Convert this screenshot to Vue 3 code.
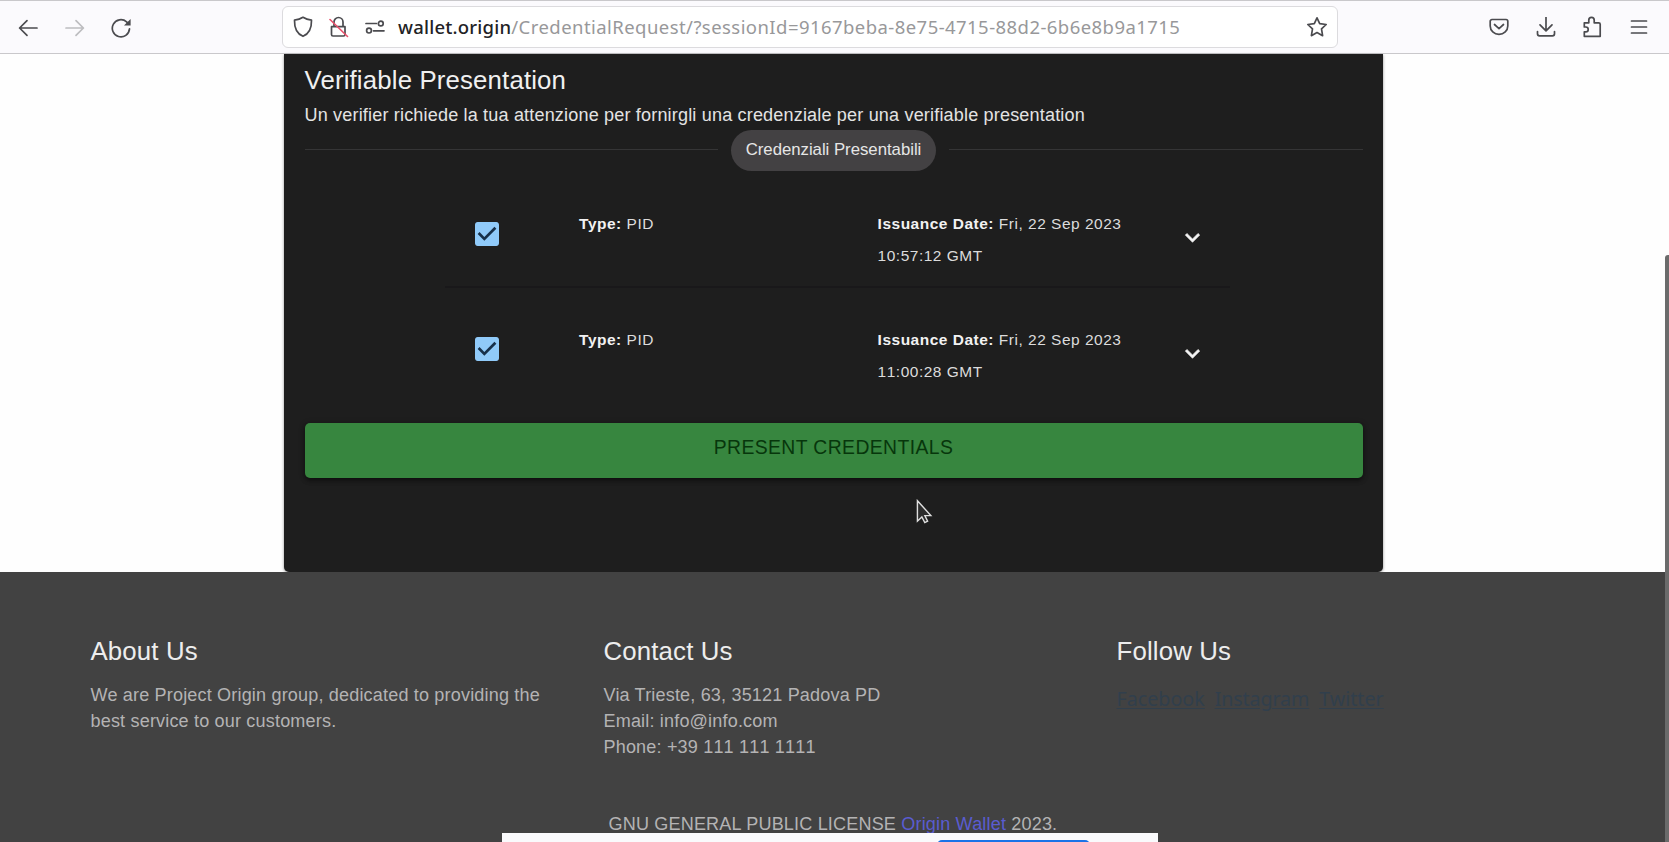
<script setup>
const host = 'wallet.origin'
const path = '/CredentialRequest/?sessionId=9167beba-8e75-4715-88d2-6b6e8b9a1715'
const credentials = [
  { type: 'PID', day: 'Fri, 22 Sep 2023', time: '10:57:12 GMT' },
  { type: 'PID', day: 'Fri, 22 Sep 2023', time: '11:00:28 GMT' },
]
const socials = ['Facebook', 'Instagram', 'Twitter']
</script>

<template>
  <div class="window">
    <header class="toolbar">
      <nav class="nav">
        <svg class="i20" viewBox="0 0 20 20"><path d="M19 10H1.6M9 2.6 1.6 10 9 17.4" /></svg>
        <svg class="i20 off" viewBox="0 0 20 20"><path d="M1 10h17.4M11 2.6 18.4 10 11 17.4" /></svg>
        <svg class="i20" viewBox="0 0 20 20"><path d="M18.5 10.9A8.6 8.6 0 1 1 15.6 3.8l2 2" /><path class="fill" d="M19.6 1v6.6H13z" /></svg>
      </nav>
      <div class="urlbar">
        <svg class="shield" viewBox="0 0 20 22"><path d="M10 1.3c2.500 1.600 5.300 2.500 8.500 2.900C18.700 12 16.300 17.600 10 20.300 3.700 17.600 1.300 12 1.500 4.200 4.700 3.800 7.500 2.900 10 1.300z" /></svg>
        <svg class="lock" viewBox="0 0 20 22"><path d="M2.500 10.700h13.500v7.800a1.500 1.500 0 0 1-1.500 1.500H4a1.500 1.500 0 0 1-1.500-1.500zM5 10.500V6a4.500 4.500 0 0 1 9 0v4.500" /><path class="slash" d="M1 3.500 18.500 20.500" /></svg>
        <svg class="perm" viewBox="0 0 20 14"><path d="M1 3.500h10.500M8.500 10.800H19" /><circle cx="15.800" cy="3.500" r="2.400" /><circle cx="4" cy="10.600" r="2.400" /></svg>
        <span class="url"><b>{{ host }}</b><span>{{ path }}</span></span>
        <svg class="star" viewBox="0 0 22 22"><path d="M11 1.800 13.700 7.700 20.200 8.500 15.500 12.900 16.600 19.700 11 16.600 5.400 19.700 6.500 12.900 1.800 8.500 8.300 7.700z" /></svg>
      </div>
      <div class="tools">
        <svg class="i20" viewBox="0 0 20 20"><path d="M3 2.500h14a1.800 1.800 0 0 1 1.800 1.800V9a8.800 8.300 0 0 1-17.600 0V4.300A1.800 1.800 0 0 1 3 2.500zM5.500 7.500 10 11.600l4.500-4.100" /></svg>
        <svg class="i20" viewBox="0 0 20 20"><path d="M10 0v13.600M4 7.800l6 6 6-6M1.500 14.500v2.300a2 2 0 0 0 2 2h13a2 2 0 0 0 2-2v-2.300" /></svg>
        <svg class="i20" viewBox="0 0 20 22"><path d="M2.300 6.800h4.500V4a2.600 2.600 0 0 1 5.400 0v2.800h4.500a1.500 1.500 0 0 1 1.500 1.500v12H2.300v-4.500h1.500a2.300 2.300 0 0 0 0-4.800H2.300z" /></svg>
        <svg class="i20" viewBox="0 0 20 20"><path d="M2.500 4h15M2.500 10h15M2.500 16h15" /></svg>
      </div>
    </header>

    <main class="page">
      <section class="card">
        <h1>Verifiable Presentation</h1>
        <p class="lead">Un verifier richiede la tua attenzione per fornirgli una credenziale per una verifiable presentation</p>
        <div class="divider"><span class="chip">Credenziali Presentabili</span></div>
        <div class="list">
          <div v-for="c in credentials" :key="c.time" class="row">
            <svg class="check" viewBox="3 3 18 18"><rect x="5" y="5" width="14" height="14" fill="#17304a" /><path d="M19 3H5c-1.110 0-2 .9-2 2v14c0 1.100.89 2 2 2h14c1.110 0 2-.9 2-2V5c0-1.100-.89-2-2-2zm-9 14l-5-5 1.410-1.410L10 14.170l7.590-7.590L19 8l-9 9z" /></svg>
            <div class="type"><b>Type:</b> {{ c.type }}</div>
            <div class="date"><b>Issuance Date:</b> {{ c.day }}<br />{{ c.time }}</div>
            <svg class="chev" viewBox="0 0 24 24"><path d="M16.590 8.590L12 13.170 7.410 8.590 6 10l6 6 6-6z" /></svg>
          </div>
        </div>
        <button class="present">PRESENT CREDENTIALS</button>
      </section>
    </main>

    <footer class="footer">
      <div class="cols">
        <div>
          <h2>About Us</h2>
          <p>We are Project Origin group, dedicated to providing the<br />best service to our customers.</p>
        </div>
        <div>
          <h2>Contact Us</h2>
          <p>Via Trieste, 63, 35121 Padova PD<br />Email: info@info.com<br /><span class="phone">Phone: +39 111 111 1111</span></p>
        </div>
        <div>
          <h2>Follow Us</h2>
          <div class="social"><a v-for="s in socials" :key="s">{{ s }}</a></div>
        </div>
      </div>
      <p class="license">GNU GENERAL PUBLIC LICENSE <a>Origin Wallet</a> 2023.</p>
    </footer>

    <div class="scroll"></div>
    <div class="popup"><i></i></div>
    <svg class="cursor" viewBox="0 0 18 27"><path d="M1.500 1.500v21.700l4.700-4.400 3.100 6 3-1.500-2.900-6h6.300z" /></svg>
  </div>
</template>

<style>
body { margin: 0; overflow: hidden; }
</style>

<style scoped>
* { box-sizing: border-box; }
.window {
  position: relative; display: flex; flex-direction: column;
  width: 1669px; height: 842px; overflow: hidden; background: #fefefe;
  font-family: "Liberation Sans", Arial, sans-serif;
}
svg { display: block; flex: none; }
.toolbar {
  display: flex; align-items: flex-start; height: 54px; flex: none;
  background: #fbfafd; border-top: 1.500px solid #c9c8cb; border-bottom: 1px solid #c9c8cb;
}
.toolbar svg { fill: none; stroke: #4b4b4f; stroke-width: 1.700; stroke-linecap: round; stroke-linejoin: round; }
.i20 { width: 20px; height: 20px; }
.toolbar .off { stroke: #bdbdc0; }
.toolbar .fill { fill: #4b4b4f; stroke: none; }
.nav { display: flex; gap: 26.500px; width: 282px; padding: 16.500px 0 0 18px; }
.urlbar {
  display: flex; align-items: center; width: 1056px; height: 41.500px; margin-top: 5px;
  padding: 0 9px 0 10px; background: #fff; border: 1.500px solid #dcdbde; border-radius: 6px;
}
.shield { width: 20px; height: 22px; }
.lock { width: 20px; height: 22px; margin-left: 16px; }
.toolbar .slash { stroke: #e8506a; stroke-width: 1.600; }
.perm { width: 20px; height: 14px; margin-left: 16px; }
.url { flex: 1; margin-left: 13px; font: 18.500px/24px "Noto Sans", "Open Sans", sans-serif; letter-spacing: .44px; color: #98989a; white-space: nowrap; }
.url b { font-weight: 500; letter-spacing: .22px; color: #222225; }
.star { width: 22px; height: 22px; }
.tools { display: flex; gap: 26.500px; padding: 16px 0 0 151px; }
.tools svg:nth-child(3) { height: 22px; margin-top: -1px; }

.page { display: flex; height: 518px; flex: none; padding-left: 284px; }
.card {
  width: 1099px; height: 518px; padding: 6px 20.500px 0; background: #1e1e1e;
  border-radius: 0 0 5px 5px; box-shadow: 0 1px 3px rgba(0, 0, 0, .45);
}
h1, h2, p { margin: 0; font-weight: 400; }
h1, h2 { font-size: 25.800px; line-height: 41px; letter-spacing: .15px; white-space: nowrap; }
h1 { color: #f0f0f0; }
.lead { margin-top: 2px; font-size: 18.060px; line-height: 25.800px; letter-spacing: .17px; color: #e3e3e3; white-space: nowrap; }
.divider { display: flex; align-items: flex-start; margin-top: 1px; height: 42px; }
.divider::before, .divider::after { content: ""; flex: 1; margin-top: 19.500px; border-top: 1.500px solid #353536; }
.divider::before { margin-right: 13px; }
.divider::after { margin-left: 13px; }
.chip {
  height: 41px; padding: 0 15px; border-radius: 21px; background: #434143; color: #e6e6e6;
  font-size: 16.770px; line-height: 39px; letter-spacing: -.02px; white-space: nowrap;
}
.list { width: 785px; margin-left: 140px; }
.row {
  display: grid; grid-template-columns: 134.600px 298.500px 300px auto; align-items: start; height: 116px; padding-top: 36px;
  border-bottom: 2px solid transparent; color: #dcdcdc; font-size: 15.480px; line-height: 32.200px; letter-spacing: .516px; white-space: nowrap;
  font-kerning: none;
}
.row b { font-kerning: auto; }
.row:first-child { border-bottom-color: #19181a; }
.row b { color: #f2f2f2; }
.check { width: 24px; height: 24px; margin: 14.500px 0 0 30.500px; fill: #90caf9; }
.row:last-child .check { margin-top: 13.500px; }
.chev { width: 29px; height: 29px; margin-top: 15.500px; fill: #f4f4f4; stroke: #f4f4f4; stroke-width: .5; }
.present {
  display: block; width: 100%; height: 55px; margin-top: 19.500px; padding: 0 0 8px; border: 0; border-radius: 5px;
  background: #37863f; color: #07360c; font: 19.350px/44px "Liberation Sans", Arial, sans-serif; letter-spacing: .4px;
  box-shadow: 0 3px 4px rgba(0, 0, 0, .35), 0 1px 6px rgba(0, 0, 0, .3);
}

.footer { position: relative; flex: 1; padding: 59px 0 0 90.500px; background: #424242; }
.cols { display: grid; grid-template-columns: repeat(3, 513px); height: 181px; }
h2 { color: #ededed; }
.footer p { font-size: 18.060px; line-height: 25.900px; letter-spacing: .17px; color: #b4b3b4; white-space: nowrap; }
.cols p { margin-top: 11px; }
.phone { font-kerning: none; }
.social { display: flex; gap: 10px; margin-top: 13px; font: 19.700px/27px "Noto Sans", "Open Sans", sans-serif; color: #313f4c; }
.social a { text-decoration: underline; text-underline-offset: 2px; }
.social a:nth-child(2) { letter-spacing: -.15px; }
.license { margin-left: 518px; }
.license a { color: #5a5cd0; }

.scroll { position: absolute; right: 0; top: 255px; bottom: 0; width: 4px; background: #6b6b6b; border-radius: 3px 0 0 0; }
.popup { position: absolute; left: 502px; bottom: 0; width: 656px; height: 9.500px; overflow: hidden; background: #fafafc; }
.popup i { position: absolute; left: 435px; top: 7px; width: 153px; height: 20px; border-radius: 5px; background: #1a73e8; }
.cursor { position: absolute; left: 915.500px; top: 499px; width: 17px; height: 26px; fill: #2c2c2c; stroke: #dedede; stroke-width: 1.500; }
</style>
